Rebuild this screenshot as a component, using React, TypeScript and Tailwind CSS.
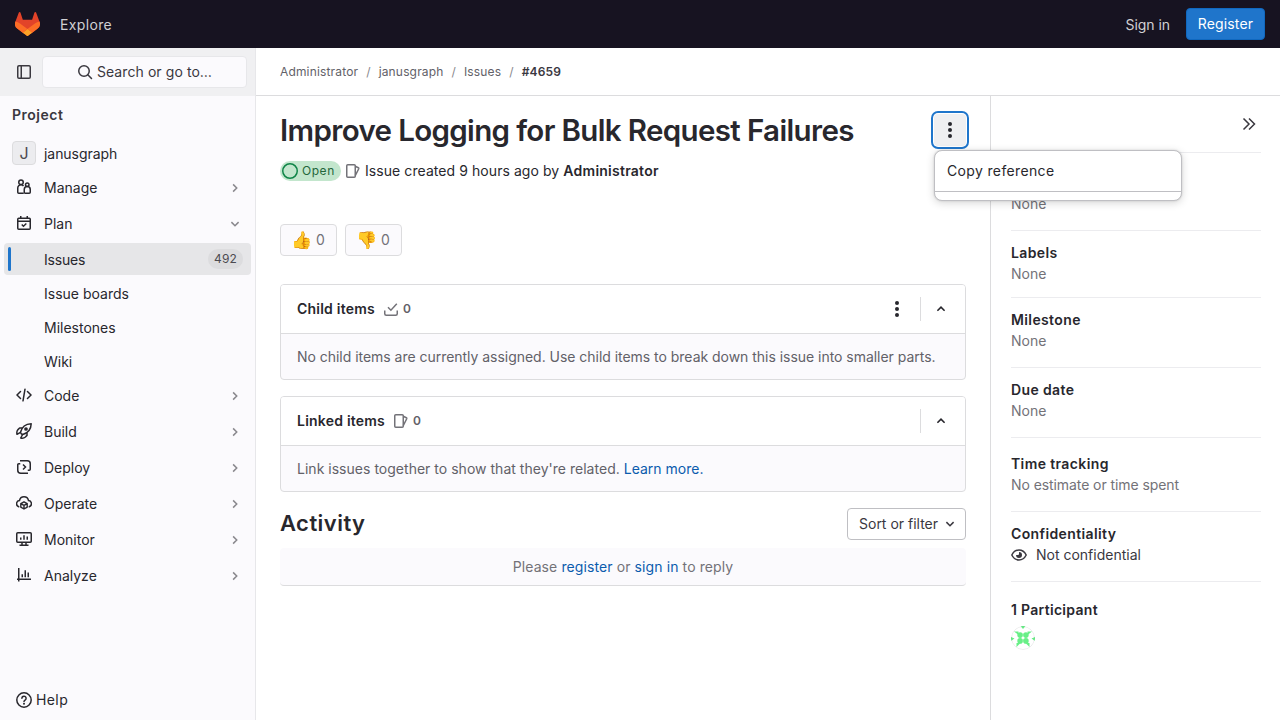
import React from "react";

type IconProps = { children: React.ReactNode; className?: string; size?: number };

function Icon({ children, className = "", size = 16 }: IconProps) {
  return (
    <svg
      width={size}
      height={size}
      viewBox="0 0 16 16"
      fill="none"
      stroke="currentColor"
      strokeWidth={1.5}
      className={"shrink-0 " + className}
    >
      {children}
    </svg>
  );
}

const Tanuki = () => (
  <svg width="25" height="24" viewBox="0 0 25 24" className="shrink-0">
    <path d="m24.507 9.5-.034-.09L21.082.562a.896.896 0 0 0-1.694.091l-2.29 7.01H7.825L5.535.653a.898.898 0 0 0-1.694-.09L.451 9.411.416 9.5a6.297 6.297 0 0 0 2.09 7.278l.012.01.03.022 5.16 3.867 2.56 1.935 1.554 1.176a1.051 1.051 0 0 0 1.268 0l1.555-1.176 2.56-1.935 5.197-3.89.014-.01A6.297 6.297 0 0 0 24.507 9.5Z" fill="#E24329" />
    <path d="m24.507 9.5-.034-.09a11.44 11.44 0 0 0-4.56 2.051l-7.447 5.632 4.742 3.584 5.197-3.89.014-.01A6.297 6.297 0 0 0 24.507 9.5Z" fill="#FC6D26" />
    <path d="m7.707 20.677 2.56 1.935 1.555 1.176a1.051 1.051 0 0 0 1.268 0l1.555-1.176 2.56-1.935-4.743-3.584-4.755 3.584Z" fill="#FCA326" />
    <path d="M5.01 11.461a11.43 11.43 0 0 0-4.56-2.05L.416 9.5a6.297 6.297 0 0 0 2.09 7.278l.012.01.03.022 5.16 3.867 4.745-3.584-7.444-5.632Z" fill="#FC6D26" />
  </svg>
);

const SidebarIcon = () => (
  <Icon>
    <rect x="1.75" y="1.75" width="12.5" height="12.5" rx="1.25" />
    <path d="M5.25 2v12" />
  </Icon>
);
const SearchIcon = () => (
  <Icon>
    <circle cx="7" cy="7" r="5.25" />
    <path d="m10.8 10.8 3.7 3.7" strokeLinecap="round" />
  </Icon>
);
const ManageIcon = () => (
  <Icon>
    <circle cx="5" cy="3.25" r="2.25" />
    <path d="M7.75 14.25h-5a1 1 0 0 1-1-1V9A3.25 3.25 0 0 1 5 5.75c1 0 1.9.5 2.5 1.2" />
    <circle cx="11.25" cy="5.75" r="1.75" />
    <path d="M8.25 10.6a3 3 0 0 1 6 0v2.65a1 1 0 0 1-1 1h-4a1 1 0 0 1-1-1Z" />
  </Icon>
);
const PlanIcon = () => (
  <Icon>
    <rect x="1.75" y="3.25" width="12.5" height="11" rx="1" />
    <path d="M2 6.25h12M4.75 1v2.5M11.25 1v2.5" />
    <path d="m5.75 9.5 1.7 1.7 2.9-2.7" />
  </Icon>
);
const CodeIcon = () => (
  <Icon>
    <path d="M4.5 4.5 1 8l3.5 3.5M11.5 4.5 15 8l-3.5 3.5M9 2.2 7 13.8" strokeLinecap="round" />
  </Icon>
);
const BuildIcon = () => (
  <Icon>
    <path d="M5.2 10.8 4.5 9.3C5.7 4.6 9 1 15.2.8 15 7 11.4 10.3 6.7 11.5Z" strokeLinejoin="round" />
    <path d="M6.4 5H3.6L2 6.6C.9 7.8.6 9.5 1 11.3l3.5-1.9M11 9.6v2.8L9.4 14c-1.2 1.1-2.9 1.4-4.7 1l1.9-3.5" strokeLinejoin="round" />
    <circle cx="10" cy="6" r="1.1" fill="currentColor" />
  </Icon>
);
const DeployIcon = () => (
  <Icon>
    <path d="M4 1.75h7.25a3 3 0 0 1 3 3v5.5a1 1 0 0 1-1 1h-1.5M12 14.25H4.75a3 3 0 0 1-3-3v-5.5a1 1 0 0 1 1-1h1.5" />
    <path d="m7 5.5 2.5 2.5L7 10.5" />
  </Icon>
);
const OperateIcon = () => (
  <Icon>
    <path d="M2.7 11.7A3.2 3.2 0 0 1 3.5 5.5a4.6 4.6 0 0 1 9 0 3.2 3.2 0 0 1 .8 6.2" strokeLinecap="round" />
    <path d="m8 6.8 3.2 1.8v3.6L8 14l-3.2-1.8V8.6L8 6.8Zm-3.2 1.8L8 10.4l3.2-1.8M8 10.4V14" strokeWidth="1.4" strokeLinejoin="round" />
  </Icon>
);
const MonitorIcon = () => (
  <Icon>
    <rect x=".75" y="1.75" width="14.5" height="9.5" rx="1" />
    <path d="M4.75 6.5v2.3M8 4.3v4.5M11.25 5.5v3.3M6 11.5v2.4M10 11.5v2.4M3.5 14.25h9" />
  </Icon>
);
const AnalyzeIcon = () => (
  <Icon>
    <path d="M2.75 1v13.5M1 12.25h14M6.25 7.3v3M9.25 3.2v7.1M12.25 5.5v4.8" />
  </Icon>
);
const HelpIcon = () => (
  <Icon>
    <circle cx="8" cy="8" r="7.2" />
    <path d="M5.9 6.3a2.1 2.1 0 1 1 3.3 1.7C8.4 8.5 8 8.7 8 9.6" strokeLinecap="round" />
    <circle cx="8" cy="11.8" r="1" fill="currentColor" stroke="none" />
  </Icon>
);
const IssueIcon = ({ className = "" }: { className?: string }) => (
  <Icon className={className}>
    <rect x="1.75" y="1.75" width="8.5" height="12.5" rx="1" />
    <path d="m10.25 3.3 3.1 1.5a.8.8 0 0 1 .4 1l-3.5 6.8" />
  </Icon>
);
const TaskIcon = () => (
  <Icon>
    <path d="M1.75 9.5v3.25a1.5 1.5 0 0 0 1.5 1.5h9.5a1.5 1.5 0 0 0 1.5-1.5V9.5" />
    <path d="m5 6.3 2.9 2.9 5.9-6.4" />
  </Icon>
);
const EyeIcon = () => (
  <Icon>
    <path d="M.8 8C2.3 5 5 3 8 3s5.7 2 7.2 5C13.7 11 11 13 8 13S2.3 11 .8 8Z" />
    <path d="M8 5a3 3 0 1 1-3 3h2a1 1 0 0 0 1-1V5Z" fill="currentColor" stroke="none" />
  </Icon>
);
const Kebab = () => (
  <Icon>
    <g fill="currentColor" stroke="none">
      <circle cx="8" cy="2" r="2" />
      <circle cx="8" cy="8" r="2" />
      <circle cx="8" cy="14" r="2" />
    </g>
  </Icon>
);
const ChevronRight = () => (
  <Icon size={12} className="text-[#89888d]">
    <path d="m5.5 3.2 4.8 4.8-4.8 4.8" strokeWidth="2" />
  </Icon>
);
const ChevronDown = ({ className = "" }: { className?: string }) => (
  <Icon size={12} className={className}>
    <path d="m3.2 5.5 4.8 4.8 4.8-4.8" strokeWidth="2" />
  </Icon>
);
const ChevronUp = () => (
  <Icon size={12}>
    <path d="M3.2 10.3 8 5.5l4.8 4.8" strokeWidth="2.2" />
  </Icon>
);

const Identicon = () => (
  <svg width="24" height="24" viewBox="0 0 24 24" className="rounded-full">
    <g fill="#68ef87">
      <path d="M9.5 0h5L12 3ZM3 5.5h4.5V9ZM21 5.5h-4.5V9ZM0 11l3.5 1.5L0 15ZM24 11l-3.5 1.5L24 15ZM5.5 17h4l-4 4ZM18.5 17h-4l4 4Z" />
      <circle cx="9.1" cy="9.1" r="2.8" />
      <circle cx="14.9" cy="9.1" r="2.8" />
      <circle cx="9.1" cy="14.9" r="2.8" />
      <circle cx="14.9" cy="14.9" r="2.8" />
    </g>
    <circle cx="12" cy="12" r="11.5" fill="none" stroke="#1f1e24" strokeOpacity=".08" />
  </svg>
);

function NavItem({ icon, label, open }: { icon: React.ReactNode; label: string; open?: boolean }) {
  return (
    <a className="flex h-8 items-center pl-3 pr-[10px] text-[#28272d]">
      <span className="-mt-0.5 mr-3">{icon}</span>
      <span className="flex-1">{label}</span>
      {open ? <ChevronDown className="text-[#89888d]" /> : <ChevronRight />}
    </a>
  );
}

function SubItem({ label }: { label: string }) {
  return <a className="flex h-8 items-center pl-10 text-[#28272d]">{label}</a>;
}

function Sidebar() {
  return (
    <aside className="flex w-64 shrink-0 flex-col border-r border-[#e7e7ea] bg-[#fbfafd]">
      <div className="flex h-12 shrink-0 items-center bg-[#f0f0f2] pl-4 pr-2 text-[#3a383f]">
        <SidebarIcon />
        <div className="ml-[10px] flex h-8 flex-1 items-center justify-center gap-1 rounded-[4px] border border-[#e7e7ea] bg-[#fbfafd]">
          <SearchIcon />
          <span className="tracking-[0.08px]">Search or go to…</span>
        </div>
      </div>
      <div className="flex h-[38px] items-center pl-3 font-semibold tracking-[0.5px] text-[#3a383f]">Project</div>
      <nav className="flex flex-1 flex-col px-1">
        <div className="flex h-[38px] items-center pl-2">
          <span className="flex size-6 items-center justify-center rounded-[4px] border border-[#dcdcde] bg-[#ececef] text-base text-[#4c4b51]">
            J
          </span>
          <span className="ml-2 mt-0.5 tracking-[-0.05px] text-[#28272d]">janusgraph</span>
        </div>
        <div className="flex flex-col gap-1">
          <NavItem icon={<ManageIcon />} label="Manage" />
          <NavItem icon={<PlanIcon />} label="Plan" open />
        </div>
        <div className="mb-0.5 mt-[3px] flex flex-col gap-0.5">
          <a className="mb-px flex h-8 items-center rounded-[4px] bg-[#e6e6e8] px-1 pr-2 text-[#28272d]">
            <span className="h-6 w-[3px] rounded bg-[#1f75cb]" />
            <span className="ml-[33px] mt-0.5 flex-1 tracking-[-0.2px]">Issues</span>
            <span className="flex h-5 items-center rounded-full bg-[#dcdcde] px-[6px] text-xs tracking-[0.15px] text-[#4c4b51]">492</span>
          </a>
          <SubItem label="Issue boards" />
          <SubItem label="Milestones" />
          <SubItem label="Wiki" />
        </div>
        <div className="flex flex-col gap-1">
          <NavItem icon={<CodeIcon />} label="Code" />
          <NavItem icon={<BuildIcon />} label="Build" />
          <NavItem icon={<DeployIcon />} label="Deploy" />
          <NavItem icon={<OperateIcon />} label="Operate" />
          <NavItem icon={<MonitorIcon />} label="Monitor" />
          <NavItem icon={<AnalyzeIcon />} label="Analyze" />
        </div>
      </nav>
      <div className="flex h-10 items-center gap-1 pl-4 text-[#28272d]">
        <HelpIcon />
        <span className="tracking-[0.4px]">Help</span>
      </div>
    </aside>
  );
}

type PanelProps = { title: string; icon: React.ReactNode; menu?: boolean; children: React.ReactNode };

function Panel({ title, icon, menu, children }: PanelProps) {
  return (
    <section className="mb-4 h-24 overflow-hidden rounded-[4px] border border-[#dcdcde] bg-[#fbfafd]">
      <header className="flex h-[49px] items-center border-b border-[#dcdcde] bg-white pl-4 pr-[18px] text-[#28272d]">
        <h2 className="font-semibold tracking-[0.22px]">{title}</h2>
        <span className="ml-2 text-[#737278]">{icon}</span>
        <span className="ml-1 flex-1 text-xs font-semibold text-[#626168]">0</span>
        {menu && <Kebab />}
        <span className="ml-[15px] mr-[14px] h-6 w-px bg-[#dcdcde]" />
        <ChevronUp />
      </header>
      <p className="flex h-[45px] items-center whitespace-pre pl-4 text-[#626168]">{children}</p>
    </section>
  );
}

function Field({ title, className, children }: { title?: string; className: string; children: React.ReactNode }) {
  return (
    <div className={"border-b border-[#ececef] leading-5 " + className}>
      {title && <h3 className="font-semibold tracking-[0.38px] text-[#28272d]">{title}</h3>}
      <div className="mt-px text-[#737278]">{children}</div>
    </div>
  );
}

export default function App() {
  return (
    <div className="flex h-[720px] w-[1280px] flex-col overflow-hidden bg-white font-['Inter',sans-serif] text-sm">
      <header className="flex h-12 shrink-0 items-center bg-[#171321] pl-[15px] pr-[15px] text-[#d1d0d3]">
        <Tanuki />
        <span className="ml-5 mt-0.5 flex-1 tracking-[0.35px]">Explore</span>
        <span className="mr-4 mt-0.5 tracking-[-0.05px]">Sign in</span>
        <button className="h-8 w-[79px] rounded-[4px] border border-[#1068bf] bg-[#1f75cb] tracking-[0.15px] text-white">Register</button>
      </header>
      <div className="flex min-h-0 flex-1">
        <Sidebar />
        <div className="flex min-w-0 flex-1 flex-col">
          <div className="flex h-12 shrink-0 items-center gap-2 border-b border-[#dcdcde] pl-6 text-xs tracking-[0.16px] text-[#626168]">
            <span>Administrator</span>
            <span className="text-[#89888d]">/</span>
            <span>janusgraph</span>
            <span className="text-[#89888d]">/</span>
            <span>Issues</span>
            <span className="text-[#89888d]">/</span>
            <span className="font-semibold text-[#3a383f]">#4659</span>
          </div>
          <div className="flex min-h-0 flex-1">
            <main className="w-[734px] shrink-0 px-6 text-[#28272d]">
              <div className="flex h-[65px] items-start justify-between pt-[18px]">
                <h1 className="whitespace-nowrap text-[29.5px] font-semibold leading-8 tracking-[-0.64px]">
                  Improve Logging for Bulk Request Failures
                </h1>
                <div className="relative">
                  <button className="flex size-8 items-center justify-center rounded-[4px] bg-[#efeff1] shadow-[0_0_0_1px_#fff,0_0_0_3px_#1f75cb]">
                    <Kebab />
                  </button>
                  <div className="absolute left-0 top-[36px] z-10 h-[51px] w-[248px] rounded-lg border border-[#bfbfc3] bg-white shadow-[0_2px_8px_rgba(5,5,6,0.16),0_0_2px_rgba(5,5,6,0.16)]">
                    <div className="flex h-[41px] items-center border-b border-[#bfbfc3] pl-3 tracking-[0.35px] text-[#28272d]">
                      Copy reference
                    </div>
                  </div>
                </div>
              </div>
              <div className="flex h-5 items-center">
                <span className="flex h-5 w-[61px] items-center gap-1 rounded-full bg-[#c3e6cd] pl-0.5 text-xs tracking-[0.55px] text-[#24663b]">
                  <Icon className="text-[#108548]">
                    <circle cx="8" cy="8" r="7.25" />
                  </Icon>
                  Open
                </span>
                <IssueIcon className="ml-1 text-[#737278]" />
                <span className="ml-1 whitespace-pre tracking-[0.07px]">
                  Issue created 9 hours ago by <b className="font-semibold tracking-[0.25px]">Administrator</b>
                </span>
              </div>
              <div className="mt-[43px] flex gap-2">
                {["👍", "👎"].map((emoji) => (
                  <button key={emoji} className="flex h-8 w-[57px] items-center rounded-[4px] border border-[#dcdcde] bg-[#fbfafd] pl-[11px] text-[#737278]">
                    <span className="flex w-6">
                      <span className="-ml-px text-[17px] leading-none">{emoji}</span>
                    </span>
                    <span>0</span>
                  </button>
                ))}
              </div>
              <div className="mt-7">
                <Panel title="Child items" icon={<TaskIcon />} menu>
                  <span className="tracking-[-0.03px]">
                    No child items are currently assigned. Use child items to break down this issue into smaller parts.
                  </span>
                </Panel>
                <Panel title="Linked items" icon={<IssueIcon />}>
                  <span className="tracking-[0.02px]">Link issues together to show that they're related. </span>
                  <a className="text-[#0b5cad]">Learn more.</a>
                </Panel>
              </div>
              <div className="flex h-8 items-center justify-between">
                <h2 className="text-[22px] font-semibold tracking-[0.45px]">Activity</h2>
                <button className="flex h-8 w-[119px] items-center justify-between rounded-[4px] border border-[#bfbfc3] bg-white pl-[11px] pr-[9px] text-[#3a383f]">
                  Sort or filter
                  <ChevronDown />
                </button>
              </div>
              <div className="mt-2 flex h-[38px] items-center justify-center whitespace-pre rounded-[4px] border-b border-[#dcdcde] bg-[#fbfafd] tracking-[0.1px] text-[#737278]">
                Please <a className="text-[#0b5cad]">register</a> or <a className="text-[#0b5cad]">sign in</a> to reply
              </div>
            </main>
            <aside className="flex-1 border-l border-[#dcdcde] pl-5 pr-[19px]">
              <div className="flex h-[57px] items-center justify-end border-b border-[#ececef] pr-1 text-[#3a383f]">
                <Icon>
                  <path d="M2.5 2.5 8 8l-5.5 5.5M8 2.5 13.5 8 8 13.5" />
                </Icon>
              </div>
              <Field className="h-[78px] pt-10">None</Field>
              <Field title="Labels" className="h-[67px] pt-3">None</Field>
              <Field title="Milestone" className="h-[70px] pt-3">None</Field>
              <Field title="Due date" className="h-[70px] pt-3">None</Field>
              <Field title="Time tracking" className="h-[74px] pt-4">
                <span className="tracking-[-0.08px]">No estimate or time spent</span>
              </Field>
              <Field title="Confidentiality" className="h-[70px] pt-3">
                <span className="flex items-center gap-[9px] text-[#3a383f]">
                  <EyeIcon />
                  Not confidential
                </span>
              </Field>
              <h3 className="mb-[6px] mt-[18px] font-semibold leading-5 tracking-[0.3px] text-[#28272d]">1 Participant</h3>
              <Identicon />
            </aside>
          </div>
        </div>
      </div>
    </div>
  );
}
